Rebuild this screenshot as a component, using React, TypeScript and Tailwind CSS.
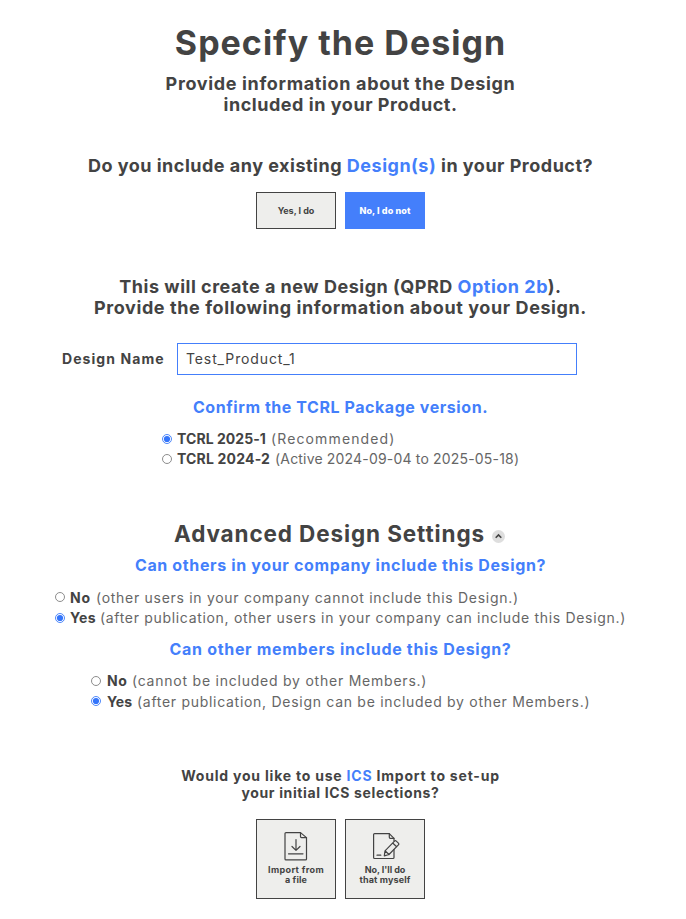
import React from "react";

function Radio({ checked, className = "" }: { checked?: boolean; className?: string }) {
  return (
    <svg className={`h-[10px] w-[10px] shrink-0 ${className}`} viewBox="0 0 10 10" fill="none">
      <circle cx="5" cy="5" r="4.5" fill="#fff" stroke={checked ? "#3b7bf8" : "#808080"} strokeWidth="0.9" />
      {checked && <circle cx="5" cy="5" r="3.1" fill="#3475fb" />}
    </svg>
  );
}

type OptionProps = {
  checked?: boolean;
  label: string;
  note: string;
  rowClass: string;
  labelClass: string;
  noteClass: string;
  radioClass?: string;
};

function Option({ checked, label, note, rowClass, labelClass, noteClass, radioClass }: OptionProps) {
  return (
    <label className={`flex h-5 items-center whitespace-nowrap text-[14px] leading-5 ${rowClass}`}>
      <Radio checked={checked} className={radioClass} />
      <span className={`shrink-0 font-bold ${labelClass}`}>{label}</span>
      <span className={`text-[#666] ${noteClass}`}>{note}</span>
    </label>
  );
}

function Blue({ children }: { children: React.ReactNode }) {
  return <span className="text-[#447ffb]">{children}</span>;
}

export default function App() {
  return (
    <div className="min-h-[919px] bg-white">
      <main className="flex w-[681px] flex-col pt-[21px] text-center font-[Inter,'Noto_Sans',sans-serif] whitespace-nowrap text-[#434343]">
        <h1 className="text-[34px] leading-[44px] font-bold tracking-[1.02px]">Specify the Design</h1>
        <div className="mt-2 text-[18px] leading-[21px] font-bold">
          <p className="tracking-[0.65px]">Provide information about the Design</p>
          <p className="tracking-[0.54px]">included in your Product.</p>
        </div>

        <h2 className="mt-10 text-[18px] leading-[21px] font-bold tracking-[0.5px]">
          Do you include any existing <Blue>Design(s)</Blue> in your Product?
        </h2>
        <div className="mt-4 flex justify-center gap-[9px]">
          <button className="h-[37px] w-20 border border-[#434343] bg-[#eeeeec] text-[9px] font-bold">Yes, I do</button>
          <button className="h-[37px] w-20 bg-[#447ffb] text-[9px] font-extrabold tracking-[0.12px] text-white">No, I do not</button>
        </div>

        <div className="mt-[47px] text-[18px] leading-[21px] font-bold">
          <p className="tracking-[0.51px]">
            This will create a new Design (QPRD <Blue>Option 2b</Blue>).
          </p>
          <p className="tracking-[0.59px]">Provide the following information about your Design.</p>
        </div>

        <div className="mt-[25px] flex h-8 items-center pl-[62px] text-[14px]">
          <label className="w-[115px] pb-[2px] text-left font-bold tracking-[1.07px]">Design Name</label>
          <div className="flex h-8 w-[400px] items-center border border-[#447ffb] pb-[2px] pl-2 tracking-[0.88px]">Test_Product_1</div>
        </div>

        <h3 className="mt-[22px] text-[16px] leading-5 font-bold tracking-[0.56px]">
          <Blue>Confirm the TCRL Package version.</Blue>
        </h3>
        <div className="mt-3">
          <Option checked rowClass="pl-[162px]" label="TCRL 2025-1" labelClass="ml-[5px] w-[94px] text-left tracking-[0.06px]" note="(Recommended)" noteClass="tracking-[1.13px]" />
          <Option rowClass="pl-[162px]" label="TCRL 2024-2" labelClass="ml-[5px] w-[98px] text-left tracking-[0.18px]" note="(Active 2024-09-04 to 2025-05-18)" noteClass="tracking-[0.18px]" />
        </div>

        <div className="mt-[50px] flex h-[30px] items-center pl-[174px]">
          <h2 className="w-[312px] text-left text-[22.5px] leading-[30px] font-bold tracking-[0.88px]">Advanced Design Settings</h2>
          <svg className="mt-[5px] ml-[6px] h-[13px] w-[13px]" viewBox="0 0 13 13" fill="none">
            <circle cx="6.5" cy="6.5" r="6.5" fill="#dedede" />
            <path d="M3.7 7.8 6.5 5l2.8 2.8" stroke="#434343" strokeWidth="1.6" />
          </svg>
        </div>

        <h3 className="mt-[6px] text-[16px] leading-5 font-bold tracking-[0.64px]">
          <Blue>Can others in your company include this Design?</Blue>
        </h3>
        <div className="mt-[13px]">
          <Option rowClass="pl-[55px]" radioClass="mb-[2px]" label="No" labelClass="ml-[5px] w-[26px] text-left tracking-[0.8px]" note="(other users in your company cannot include this Design.)" noteClass="tracking-[0.71px]" />
          <Option checked rowClass="pl-[55px]" label="Yes" labelClass="ml-[5px] w-[30px] text-left tracking-[0.35px]" note="(after publication, other users in your company can include this Design.)" noteClass="tracking-[0.68px]" />
        </div>

        <h3 className="mt-[11px] text-[16px] leading-5 font-bold tracking-[0.69px]">
          <Blue>Can other members include this Design?</Blue>
        </h3>
        <div className="mt-3 flex flex-col gap-px">
          <Option rowClass="pl-[91px]" label="No" labelClass="ml-[6px] w-[25px] text-left tracking-[0.6px]" note="(cannot be included by other Members.)" noteClass="tracking-[0.77px]" />
          <Option checked rowClass="pl-[91px]" radioClass="mb-[2px]" label="Yes" labelClass="ml-[6px] w-[30px] text-left tracking-[0.1px]" note="(after publication, Design can be included by other Members.)" noteClass="tracking-[0.71px]" />
        </div>

        <div className="mt-[55px] text-[14px] leading-[17px] font-bold">
          <p className="tracking-[0.79px]">
            Would you like to use <Blue>ICS</Blue> Import to set-up
          </p>
          <p className="tracking-[0.64px]">your initial ICS selections?</p>
        </div>

        <div className="mt-[18px] flex justify-center gap-[9px] text-[9px] leading-[10px] font-bold">
          <button className="flex h-20 w-20 flex-col items-center border border-[#434343] bg-[#eeeeec] pt-[11px]">
            <svg className="h-[30px] w-[30px]" viewBox="0 0 30 30" fill="none" stroke="#434343" strokeWidth="1.2" strokeLinejoin="round" strokeLinecap="round">
              <path d="M5 1.6h14.5l6 5v21.3a1 1 0 0 1-1 1H5a1 1 0 0 1-1-1V2.6a1 1 0 0 1 1-1Z" />
              <path d="M19.5 1.6v4a1 1 0 0 0 1 1h5" />
              <path d="M15 8.5v10.8M11 15.5l4 3.9 4-3.9M7.5 22.8h14.5" />
            </svg>
            <span className="mt-[4px] block tracking-[0.36px]">Import from</span>
            <span className="block tracking-[0.15px]">a file</span>
          </button>
          <button className="flex h-20 w-20 flex-col items-center border border-[#434343] bg-[#eeeeec] pt-[11px]">
            <svg className="h-[30px] w-[30px]" viewBox="0 0 30 30" fill="none" stroke="#434343" strokeWidth="1.2" strokeLinejoin="round" strokeLinecap="round">
              <path d="M24 10V7.3l-4.7-4.7H4.6a1 1 0 0 0-1 1v22.9a1 1 0 0 0 1 1H23a1 1 0 0 0 1-1V18.5" />
              <path d="M19.3 2.6v3.7a1 1 0 0 0 1 1H24" />
              <path d="m15 19.8 9.5-9.7a1.3 1.3 0 0 1 1.8 0l2.1 2a1.3 1.3 0 0 1 0 1.8L19 23.5l-4.7 1.3ZM15 19.8l4 3.7M22.7 12l3.9 3.8M7 24.2h3.8" />
            </svg>
            <span className="mt-[4px] block tracking-[-0.05px]">No, I'll do</span>
            <span className="block tracking-[0.12px]">that myself</span>
          </button>
        </div>
      </main>
    </div>
  );
}
